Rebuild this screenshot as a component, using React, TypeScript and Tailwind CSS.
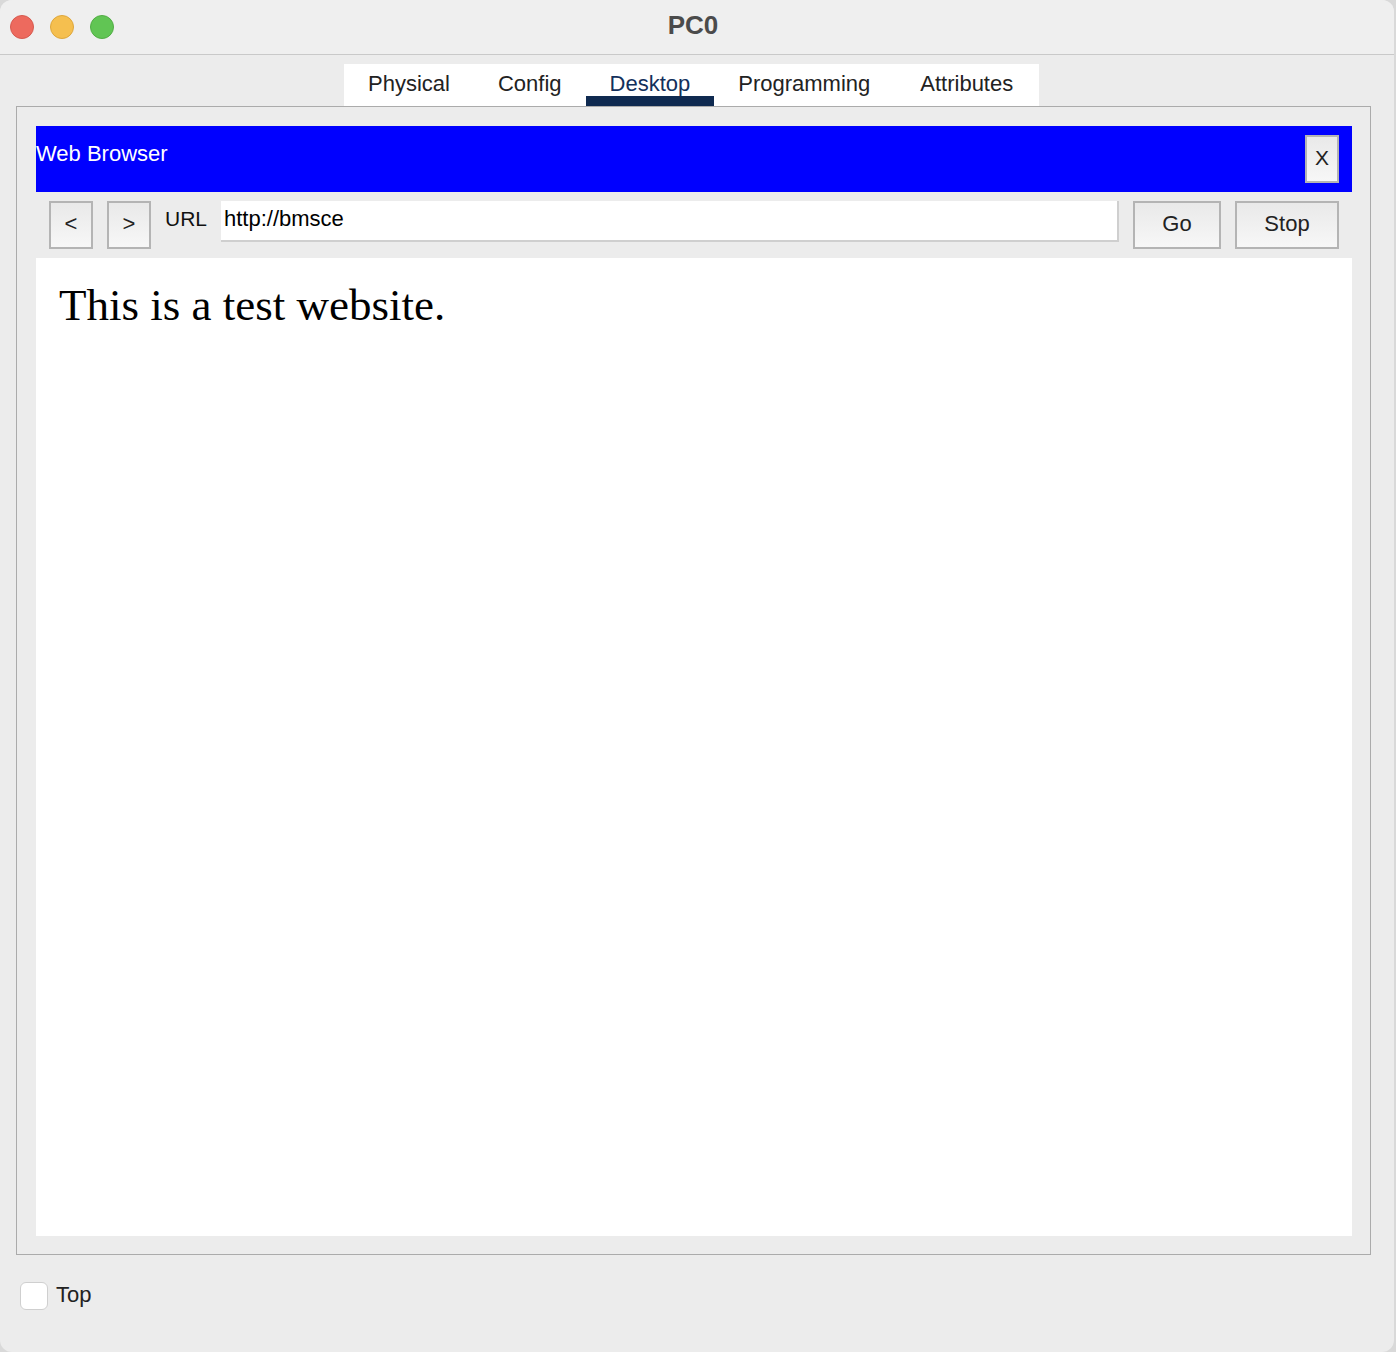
import React, { useState } from "react";

const SANS = { fontFamily: '"Liberation Sans", Arial, sans-serif' };

const tabs = ["Physical", "Config", "Desktop", "Programming", "Attributes"];

function Light({ color, ring }: { color: string; ring: string }) {
  return <div className={`w-6 h-6 rounded-full border ${color} ${ring}`} />;
}

function ToolButton({ children, className }: { children: React.ReactNode; className: string }) {
  return (
    <button
      className={`border-2 border-[#b4b4b4] bg-gradient-to-b from-[#e9e9e9] to-[#f7f7f7] text-[#222] flex items-center justify-center pb-[3px] ${className}`}
    >
      {children}
    </button>
  );
}

export default function App() {
  const [activeTab] = useState("Desktop");
  const [top, setTop] = useState(false);

  return (
    <div className="w-[1396px] h-[1352px] bg-[#d9d9d9] overflow-hidden" style={SANS}>
      <div className="w-[1394px] h-[1352px] rounded-[12px] overflow-hidden bg-[#ececec] flex flex-col">
        {/* Title bar */}
        <div className="h-[55px] shrink-0 bg-[#efefef] border-b border-[#c9c9c9] flex items-center relative">
          <div className="flex items-center gap-4 pl-[10px]">
            <Light color="bg-[#ed6a5e]" ring="border-[#d65a4f]" />
            <Light color="bg-[#f5bf4f]" ring="border-[#dea73c]" />
            <Light color="bg-[#61c554]" ring="border-[#52ad45]" />
          </div>
          <div className="absolute left-0 right-[8px] top-[10px] text-center text-[26px] leading-[30px] font-bold text-[#4b4b4b] pointer-events-none">
            PC0
          </div>
        </div>

        {/* Tabs */}
        <div className="flex pt-[9px] pl-[344px]">
          <div className="flex bg-white h-[42px] pl-[24px] pr-[26px]">
            {tabs.map((t) => (
              <div
                key={t}
                className={`relative h-full flex items-center pb-[4px] text-[22px] ${
                  t === "Desktop" ? "px-[24px] text-[#13305c]" : "px-[24px] text-[#222]"
                } ${t === "Physical" ? "pl-0" : ""} ${t === "Attributes" ? "pr-0 pl-[26px]" : ""}`}
              >
                {t}
                {t === activeTab && <div className="absolute left-0 right-0 bottom-0 h-[10px] bg-[#0f2a50]" />}
              </div>
            ))}
          </div>
        </div>

        {/* Panel */}
        <div className="mx-[16px] w-[1355px] h-[1149px] border border-[#ababab] bg-[#ececec] pl-[19px] pr-[18px] pt-[19px] pb-[18px] flex flex-col">
          <div className="h-[66px] bg-[#0000ff] flex items-center justify-between pr-[13px]">
            <span className="text-white text-[22px] pb-[12px]">Web Browser</span>
            <ToolButton className="w-[34px] h-[48px] text-[21px]">X</ToolButton>
          </div>
          <div className="h-[66px] flex items-start pt-[9px] pl-[13px] pr-[13px]">
            <ToolButton className="w-[44px] h-[48px] text-[22px]">&lt;</ToolButton>
            <ToolButton className="w-[44px] h-[48px] text-[22px] ml-[14px]">&gt;</ToolButton>
            <span className="text-[21px] text-[#111] ml-[14px] mt-[2px]">URL</span>
            <div className="ml-[14px] w-[898px] h-[41px] bg-white border-r-2 border-b-2 border-[#cfcfcf] flex items-center pl-[3px] pb-[4px] text-[22px] text-black">
              http://bmsce
            </div>
            <ToolButton className="w-[88px] h-[48px] text-[22px] ml-[14px]">Go</ToolButton>
            <ToolButton className="w-[104px] h-[48px] text-[22px] ml-[14px]">Stop</ToolButton>
          </div>
          <div className="flex-1 bg-white pl-[23px] pt-[25px]">
            <div className="text-[45px] text-black leading-none" style={{ fontFamily: '"Liberation Serif", "Times New Roman", serif' }}>
              This is a test website.
            </div>
          </div>
        </div>

        {/* Bottom */}
        <label className="flex items-start mt-[27px] ml-[20px] gap-[8px] cursor-pointer">
          <input type="checkbox" checked={top} onChange={() => setTop(!top)} className="sr-only" />
          <span className="w-[28px] h-[28px] rounded-[6px] bg-white border border-[#cfcfcf] block" />
          <span className="text-[22px] leading-[26px] text-[#222]">Top</span>
        </label>
      </div>
    </div>
  );
}
